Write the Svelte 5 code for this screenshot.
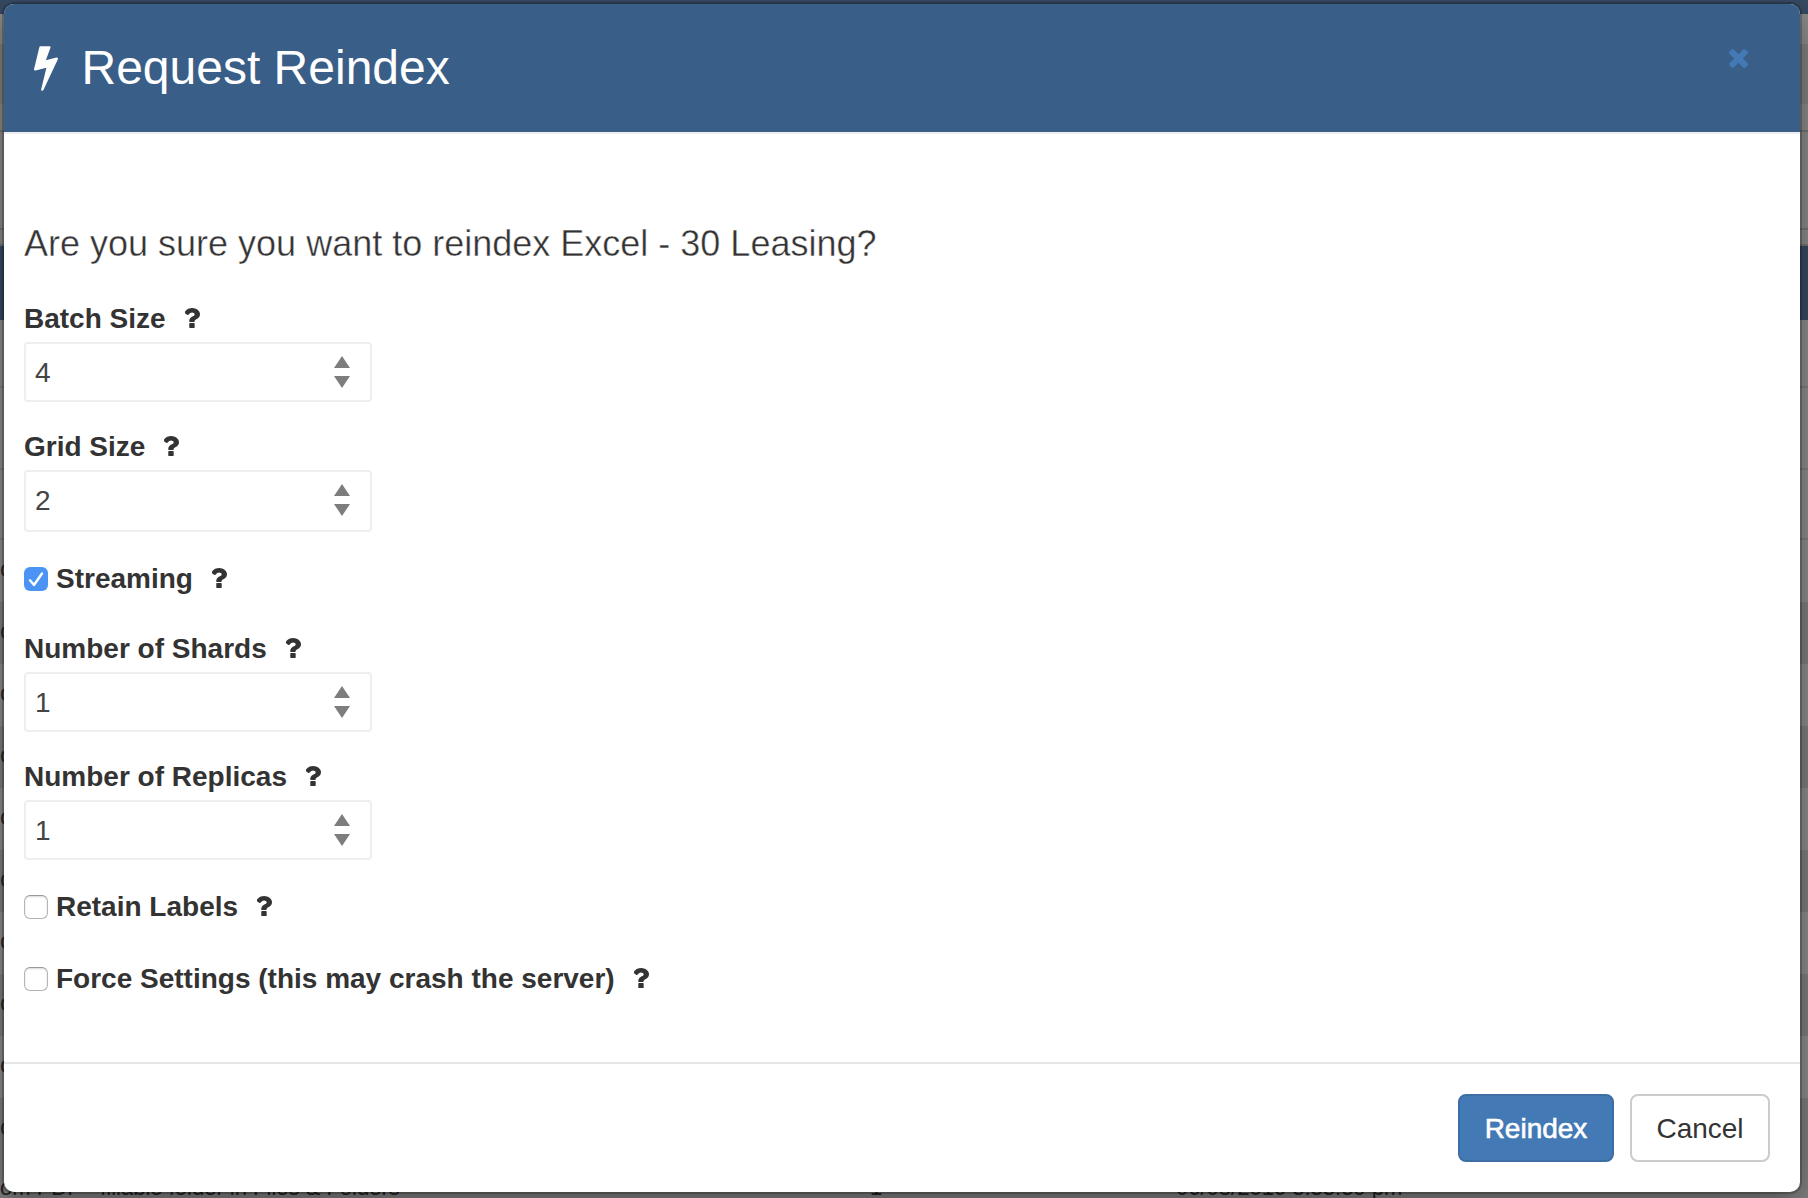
<script>
  let fields = $state([
    { kind: 'number', id: 'batch', label: 'Batch Size', value: 4 },
    { kind: 'number', id: 'grid', label: 'Grid Size', value: 2 },
    { kind: 'check', id: 'streaming', label: 'Streaming', checked: true },
    { kind: 'number', id: 'shards', label: 'Number of Shards', value: 1 },
    { kind: 'number', id: 'replicas', label: 'Number of Replicas', value: 1 },
    { kind: 'check', id: 'retain', label: 'Retain Labels', checked: false },
    { kind: 'check', id: 'force', label: 'Force Settings (this may crash the server)', checked: false }
  ]);
  const rows = Array.from({ length: 10 }, (_, i) => i);
</script>

{#snippet help()}
  <svg class="help" viewBox="514 256 890 1280" preserveAspectRatio="none" aria-hidden="true">
    <path d="M1088 1256v240q0 16-12 28t-28 12h-240q-16 0-28-12t-12-28v-240q0-16 12-28t28-12h240q16 0 28 12t12 28zm316-600q0 54-15.500 101t-35 76.500-55 59.500-57.500 43.500-61 35.500q-41 23-68.500 65t-27.500 67q0 17-12 32.500t-28 15.500h-240q-15 0-25.500-18.500t-10.500-37.500v-45q0-83 65-156.500t143-108.500q59-27 84-56t25-76q0-42-46.500-74t-107.500-32q-65 0-108 29-35 25-107 115-13 16-31 16-12 0-25-8l-164-125q-13-10-15.500-25t5.500-28q160-266 464-266 80 0 161 31t146 83 106 127.500 41 158.500z" />
  </svg>
{/snippet}

<div class="page">
  <div class="backdrop" aria-hidden="true">
    <div class="strip nav"></div>
    <div class="strip tools"></div>
    <div class="strip tabs"></div>
    <div class="strip head"></div>
    <div class="strip filters"></div>
    <div class="rows">
      {#each rows as row (row)}
        <div class="row">o</div>
      {/each}
    </div>
    <div class="row-text">
      <span class="name">om PDF - fillable folder in Files &amp; Folders</span>
      <span class="count">1</span>
      <span class="date">06/08/2016 3:33:39 pm</span>
    </div>
  </div>

  <div class="modal" role="dialog" aria-labelledby="title">
    <header>
      <svg class="bolt" viewBox="448 128 896 1664" aria-hidden="true">
        <path d="M1333 566q18 20 7 44l-540 1157q-13 25-42 25-4 0-14-2-17-5-25.500-19t-4.500-30l197-808-406 101q-4 1-12 1-18 0-31-11-18-15-13-39l201-825q4-14 16-23t28-9h328q19 0 32 12.500t13 29.500q0 8-5 18l-171 463 396-98q8-2 12-2 19 0 34 15z" />
      </svg>
      <h1 id="title">Request Reindex</h1>
      <button class="close" aria-label="Close">
        <svg viewBox="302 302 1188 1188" aria-hidden="true">
          <path d="M1490 1258q0 40-28 68l-136 136q-28 28-68 28t-68-28l-294-294-294 294q-28 28-68 28t-68-28l-136-136q-28-28-28-68t28-68l294-294-294-294q-28-28-28-68t28-68l136-136q28-28 68-28t68 28l294 294 294-294q28-28 68-28t68 28l136 136q28 28 28 68t-28 68l-294 294 294 294q28 28 28 68z" />
        </svg>
      </button>
    </header>

    <main>
      <h2>Are you sure you want to reindex Excel - 30 Leasing?</h2>
      {#each fields as field (field.id)}
        {#if field.kind === 'number'}
          <div class="field {field.id}">
            <label for={field.id}>{field.label}{@render help()}</label>
            <div class="number">
              <input id={field.id} type="text" inputmode="numeric" bind:value={field.value} />
              <svg class="spinner" viewBox="0 0 16 32" aria-hidden="true">
                <path d="M8 0l8 12H0zM0 20h16L8 32z" />
              </svg>
            </div>
          </div>
        {:else}
          <label class="check {field.id}">
            <input type="checkbox" bind:checked={field.checked} />
            <span class="box">
              {#if field.checked}
                <svg viewBox="0 0 24 24" aria-hidden="true"><path d="M6 13.300L10 18L18 6.500" /></svg>
              {/if}
            </span>
            {field.label}{@render help()}
          </label>
        {/if}
      {/each}
    </main>

    <footer>
      <button class="btn primary">Reindex</button>
      <button class="btn">Cancel</button>
    </footer>
  </div>
</div>

<style>
  :global(body) {
    margin: 0;
    overflow: hidden;
  }
  .page {
    position: relative;
    box-sizing: border-box;
    width: 1808px;
    height: 1198px;
    padding: 4px 8px 6px 4px;
    overflow: hidden;
    font-family: 'Liberation Sans', Arial, sans-serif;
    color: #333;
  }

  /* dimmed page behind the dialog */
  .backdrop {
    position: absolute;
    inset: 0;
    display: flex;
    flex-direction: column;
    background: #808080;
  }
  .strip {
    box-sizing: border-box;
    flex: none;
  }
  .nav {
    height: 14px;
    background: #364a62;
  }
  .tools {
    height: 118px;
    border-bottom: 2px solid #727272;
    background: linear-gradient(#8c8c8c 30px, #808080 30px 90px, #8a8a8a 90px);
  }
  .tabs {
    height: 114px;
    border-bottom: 2px solid #747474;
    background: linear-gradient(#8a8a8a 96px, #747474 96px 98px, #8a8a8a 98px);
  }
  .head {
    height: 74px;
    background: #364a62;
  }
  .filters {
    height: 220px;
    background: linear-gradient(#8c8c8c 66px, #7e7e7e 66px 68px, #8c8c8c 68px 148px, #7e7e7e 148px 150px, #8c8c8c 150px 218px, #7e7e7e 218px);
  }
  .rows {
    flex: 1;
    color: #2c2c2c;
    font-size: 24px;
    line-height: 58px;
  }
  .row {
    box-sizing: border-box;
    height: 62px;
    background: #8c8c8c;
  }
  .row:nth-child(even) {
    background: #7e7e80;
  }
  .row-text {
    position: absolute;
    left: 0;
    bottom: 0;
    display: grid;
    grid-template-columns: 870px 306px 1fr;
    width: 100%;
    height: 26px;
    color: #222;
    font-size: 22px;
    line-height: 31px;
    white-space: nowrap;
  }

  .modal {
    position: relative;
    display: flex;
    flex-direction: column;
    height: 1188px;
    border-radius: 10px;
    overflow: hidden;
    background: #fff;
    box-shadow: 0 0 0 2px rgba(0, 0, 0, 0.2), 0 10px 30px rgba(0, 0, 0, 0.4);
  }

  header {
    box-sizing: border-box;
    display: flex;
    align-items: flex-start;
    height: 130px;
    padding: 0 52px 0 30px;
    border-bottom: 2px solid #eeeef0;
    background: #395e87;
    background-clip: padding-box;
    color: #fff;
  }
  .bolt {
    width: 24px;
    height: 45px;
    margin-top: 42px;
    fill: #fff;
  }
  h1 {
    margin: 37px 0 0 23.500px;
    font-size: 48px;
    font-weight: 400;
    line-height: 54px;
    white-space: nowrap;
  }
  .close {
    margin: 45px 0 0 auto;
    padding: 0;
    border: 0;
    background: none;
  }
  .close svg {
    display: block;
    width: 19px;
    height: 19px;
    fill: #4379b4;
  }

  main {
    flex: 1;
    padding: 90px 20px 0;
  }
  h2 {
    margin: 0 0 35px;
    font-size: 36px;
    font-weight: 400;
    line-height: 40px;
    white-space: nowrap;
    -webkit-text-stroke: 0.4px #fff;
  }
  label {
    display: flex;
    align-items: center;
    height: 40px;
    font-size: 28px;
    font-weight: 700;
    line-height: 40px;
    white-space: nowrap;
  }
  .help {
    width: 15px;
    height: 20px;
    margin: 0 0 2px 19px;
    fill: #333;
  }
  .field {
    margin-bottom: 25px;
  }
  .number {
    box-sizing: border-box;
    display: flex;
    align-items: center;
    width: 348px;
    height: 60px;
    margin-top: 3px;
    padding: 0 20px 0 9px;
    border: 2px solid #eee;
    border-radius: 4px;
  }
  .grid .number {
    height: 62px;
  }
  .number input {
    flex: 1;
    min-width: 0;
    padding: 1px 0 0;
    border: 0;
    outline: 0;
    background: none;
    color: #444;
    font: 28px/40px 'Liberation Sans', Arial, sans-serif;
  }
  .spinner {
    width: 16px;
    height: 32px;
    fill: #7d7d7d;
  }
  .grid .spinner,
  .grid input {
    margin-bottom: 2px;
  }
  .grid,
  .replicas {
    margin-bottom: 27px;
  }
  .streaming {
    margin-bottom: 30px;
  }
  .retain {
    margin-bottom: 32px;
  }
  .check input {
    position: absolute;
    opacity: 0;
  }
  .box {
    box-sizing: border-box;
    width: 24px;
    height: 24px;
    margin-right: 8px;
    border: 1px solid #b4b4b4;
    border-top-color: #999;
    border-radius: 6px;
    box-shadow: inset 0 1px 2px rgba(0, 0, 0, 0.15);
  }
  .check input:checked + .box {
    border: 0;
    background: #4b94f5;
    box-shadow: none;
  }
  .box svg {
    display: block;
    fill: none;
    stroke: #fff;
    stroke-width: 2.4;
    stroke-linecap: round;
    stroke-linejoin: round;
  }

  footer {
    box-sizing: border-box;
    display: flex;
    justify-content: flex-end;
    gap: 16px;
    height: 130px;
    padding: 30px 30px 0 0;
    border-top: 2px solid #e5e5e5;
  }
  .btn {
    box-sizing: border-box;
    width: 140px;
    height: 68px;
    padding: 1px 0 0;
    border: 2px solid #ccc;
    border-radius: 8px;
    background: #fff;
    color: #333;
    font: 28px/40px 'Liberation Sans', Arial, sans-serif;
  }
  .primary {
    width: 156px;
    border-color: #3d6ea5;
    background: #4379b4;
    color: #fff;
    -webkit-text-stroke: 0.6px #fff;
  }
</style>
